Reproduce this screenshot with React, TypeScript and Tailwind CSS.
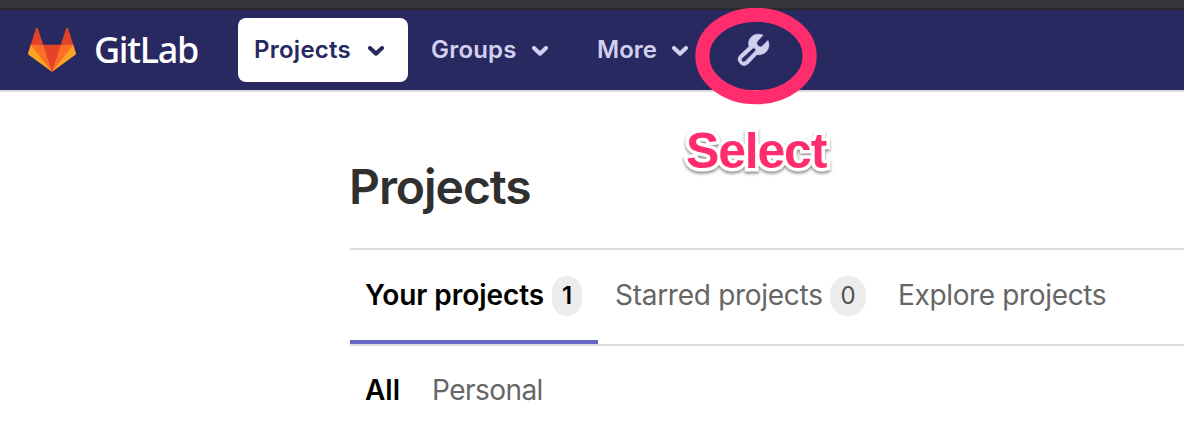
function Tanuki() {
  return (
    <svg className="h-12 w-12 shrink-0" viewBox="0 0 36 36" aria-hidden="true">
      <path fill="#e24329" d="M2 14l9.38 9v-9l-4-12.28c-.205-.632-1.176-.632-1.38 0z" />
      <path fill="#e24329" d="M34 14l-9.38 9v-9l4-12.28c.205-.632 1.176-.632 1.38 0z" />
      <path fill="#e24329" d="M18 34.38L3 14h30z" />
      <path fill="#fc6d26" d="M18 34.38L11.38 14H2l4 11z" />
      <path fill="#fc6d26" d="M18 34.38L24.62 14H34l-4 11z" />
      <path fill="#fca326" d="M2 14L.1 20.16c-.18.565 0 1.2.5 1.56L18 34.38z" />
      <path fill="#fca326" d="M34 14l1.9 6.16c.18.565 0 1.2-.5 1.56L18 34.38z" />
    </svg>
  );
}

function Chevron() {
  return (
    <svg className="mt-px h-[10px] w-4 shrink-0" viewBox="0 0 16 10" fill="none" stroke="currentColor" strokeWidth="4" strokeLinecap="round" strokeLinejoin="round" aria-hidden="true">
      <path d="M2 2l6 5.700L14 2" />
    </svg>
  );
}

function Wrench() {
  return (
    <svg className="-ml-px h-8 w-8 shrink-0 overflow-visible" viewBox="0 0 32 32" fill="currentColor" stroke="currentColor" strokeWidth="0.7" strokeLinejoin="round" aria-hidden="true">
      <path fillRule="evenodd" d="M26 1.200C21.500-.900 15.800.300 13.100 4.600c-1.600 2.600-1.900 5.300-1 8L2.500 21.600a6 6 0 0 0 8.400 8.400l9.100-9.600c3.300.700 6.700-.200 9-2.600 3-3 3.700-7.500 1.900-11.200l-5.100 5.100a3.500 3.500 0 0 1-5-5zM15.500 14.500a1.900 1.900 0 0 1 2.700 2.700L8.200 27.400a2.300 2.300 0 0 1-3.300-3.200z" />
    </svg>
  );
}

export default function App() {
  return (
    <div className="relative h-[436px] w-full overflow-hidden bg-white font-['Inter','Liberation_Sans',sans-serif]">
      <div className="h-[10px] border-b-2 border-[#29292b] bg-[#36373a]" />
      <header className="flex h-[82px] items-center border-b-2 border-[#dbdadf] bg-[#292961] pl-7 text-2xl font-semibold text-[#d1d0ee]">
        <Tanuki />
        <span className="ml-[18px] w-[125px] whitespace-nowrap pb-px font-['Noto_Sans',sans-serif] text-[36px] font-medium tracking-[-1.3px] text-white">GitLab</span>
        <nav className="ml-[19px] flex items-center">
          <a className="flex h-16 w-[170px] items-center rounded-lg bg-white pl-4 text-[#292961]">
            <span className="w-[114px] tracking-[0.25px]">Projects</span>
            <Chevron />
          </a>
          <a className="ml-[23px] flex w-[166px] items-center">
            <span className="w-[101px] tracking-[0.2px]">Groups</span>
            <Chevron />
          </a>
          <a className="flex w-[141px] items-center">
            <span className="w-[75px]">More</span>
            <Chevron />
          </a>
          <Wrench />
        </nav>
      </header>
      <main className="pl-[350px]">
        <h1 className="-ml-px flex h-[156px] items-center pt-[34px] text-[48px] font-semibold tracking-[-1.05px] text-[#303030]">Projects</h1>
        <div className="flex h-[98px] border-y-2 border-[#dbdbdb] text-[28px] text-[#666]">
          <a className="flex h-[94px] w-[248px] items-center border-b-4 border-[#6666c4] pl-[15px] font-semibold text-black">
            <span className="w-[187px] tracking-[-0.05px]">Your projects</span>
            <span className="mt-0.5 flex h-10 w-[30px] items-center justify-center rounded-[15px] bg-[#ececec] text-2xl">1</span>
          </a>
          <a className="flex h-[90px] w-[300px] items-center pl-[17px]">
            <span className="w-[215px] tracking-[-0.28px]">Starred projects</span>
            <span className="mt-0.5 flex h-10 w-9 items-center justify-center rounded-[18px] bg-[#ececec] text-2xl text-[#525252]">0</span>
          </a>
          <a className="flex h-[90px] items-center tracking-[-0.35px]">Explore projects</a>
        </div>
        <div className="flex h-[88px] items-center pl-[15px] text-[28px] text-[#666]">
          <a className="w-[67px] font-semibold text-black">All</a>
          <a className="tracking-[-0.55px]">Personal</a>
        </div>
      </main>
      <svg className="absolute left-[695px] top-[8px] h-[97px] w-[122px]" viewBox="0 0 122 97" fill="none" aria-hidden="true">
        <ellipse cx="61" cy="48" rx="53.700" ry="41.300" stroke="#ff2d6d" strokeWidth="14" />
      </svg>
      <div className="absolute left-[686px] top-[123px] whitespace-nowrap font-['Liberation_Sans',sans-serif] text-[50px] leading-[56px] font-bold tracking-[-1.2px] text-[#ff2d6d] [-webkit-text-stroke:7px_white] [paint-order:stroke_fill] [stroke-linejoin:round] drop-shadow-[0_2px_1.5px_rgba(0,0,0,0.45)]">Select</div>
    </div>
  );
}
